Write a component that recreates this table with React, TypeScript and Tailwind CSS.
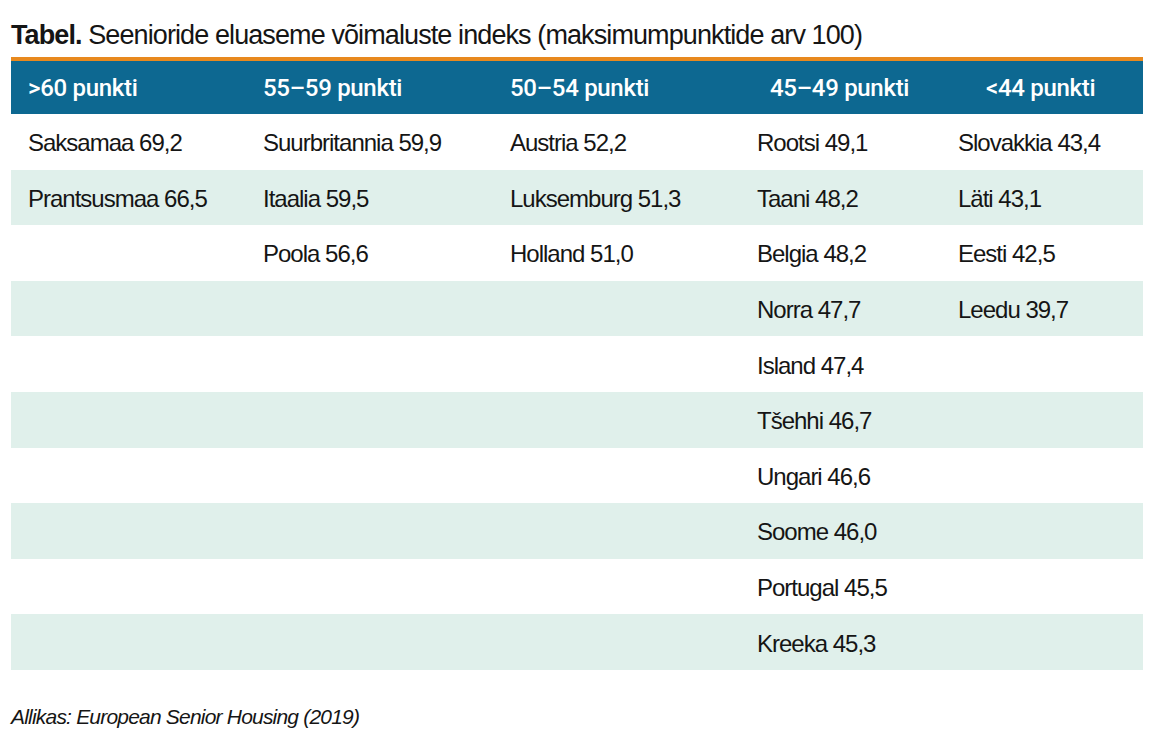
const cols: string[][] = [
  ["Saksamaa 69,2", "Prantsusmaa 66,5"],
  ["Suurbritannia 59,9", "Itaalia 59,5", "Poola 56,6"],
  ["Austria 52,2", "Luksemburg 51,3", "Holland 51,0"],
  [
    "Rootsi 49,1",
    "Taani 48,2",
    "Belgia 48,2",
    "Norra 47,7",
    "Island 47,4",
    "Tšehhi 46,7",
    "Ungari 46,6",
    "Soome 46,0",
    "Portugal 45,5",
    "Kreeka 45,3",
  ],
  ["Slovakkia 43,4", "Läti 43,1", "Eesti 42,5", "Leedu 39,7"],
];

const headers = [
  { label: ">60 punkti", pad: "pl-[17px]" },
  { label: "55–59 punkti", pad: "pl-[17px]" },
  { label: "50–54 punkti", pad: "pl-[17px]" },
  { label: "45–49 punkti", pad: "pl-[30px]" },
  { label: "<44 punkti", pad: "pl-[45px]" },
];

const grid = "grid grid-cols-[235px_247px_247px_201px_1fr]";

export default function App() {
  const rows = Array.from({ length: 10 }, (_, i) => i);
  return (
    <div
      className="w-[1171px] h-[754px] bg-white text-[#151515] overflow-hidden"
      style={{ fontFamily: '"Liberation Sans", Arial, sans-serif' }}
    >
      <div className="pl-[11px] w-[1143px] pt-[17px]">
        <h1 className="text-[27px] leading-[36px] h-[40px] tracking-[-0.9px]">
          <span className="font-bold">Tabel.</span> Seenioride eluaseme võimaluste indeks (maksimumpunktide arv 100)
        </h1>
        <div className="w-[1132px]">
          <div className="h-[4px] bg-[#e8891e]" />
          <div
            className={`${grid} h-[53px] items-center bg-[#0d6891] text-white text-[24px] font-medium tracking-[-0.3px]`}
            style={{ fontFamily: "Roboto, sans-serif" }}
          >
            {headers.map((h) => (
              <div key={h.label} className={h.pad}>
                {h.label}
              </div>
            ))}
          </div>
          {rows.map((r) => (
            <div
              key={r}
              className={`${grid} h-[55.6px] items-center pt-[3px] text-[24px] tracking-[-1px] ${r % 2 === 1 ? "bg-[#e0f0eb]" : "bg-white"}`}
            >
              {cols.map((c, ci) => (
                <div key={ci} className="pl-[17px] whitespace-nowrap">
                  {c[r] ?? ""}
                </div>
              ))}
            </div>
          ))}
        </div>
        <p className="mt-[31px] italic text-[21px] tracking-[-0.8px]">Allikas: European Senior Housing (2019)</p>
      </div>
    </div>
  );
}
